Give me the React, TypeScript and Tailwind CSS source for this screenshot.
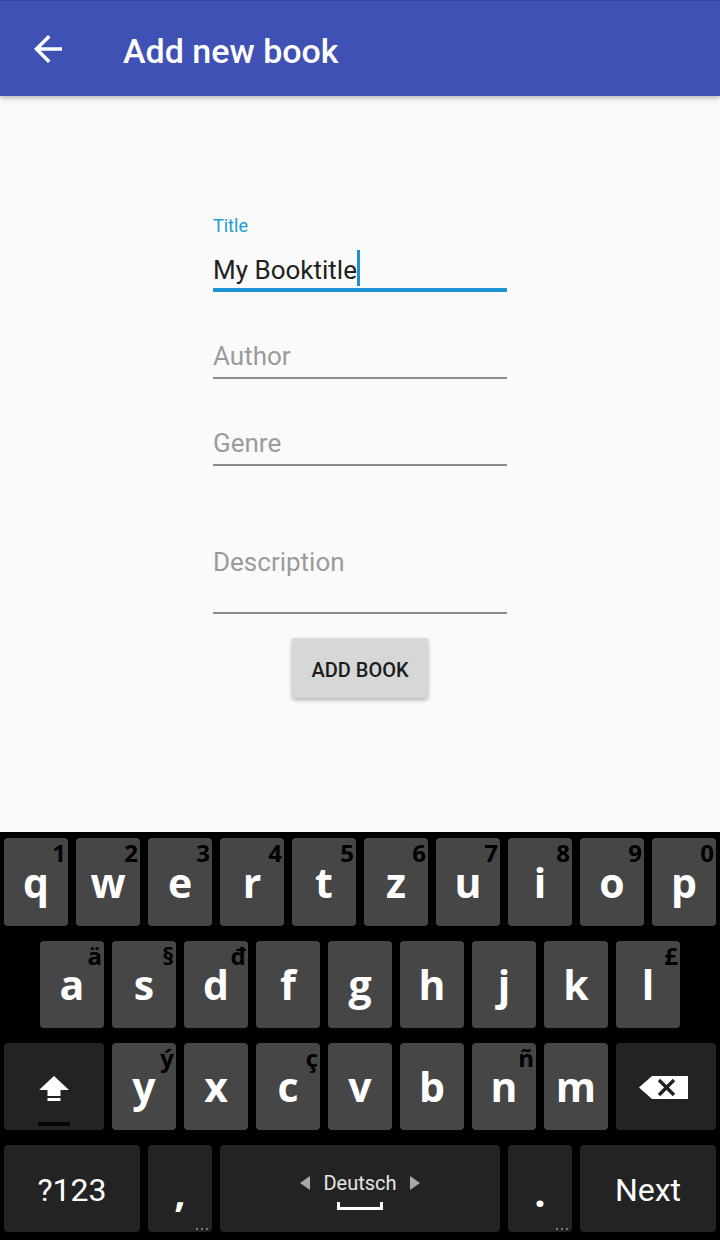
import React from "react";

const KEYFONT = { fontFamily: '"Open Sans", "DejaVu Sans", sans-serif' };
const ROBOTO = { fontFamily: 'Roboto, "Noto Sans", sans-serif' };

function LetterKey({ ch, hint }: { ch: string; hint?: string }) {
  return (
    <div className="relative flex h-full w-[64px] items-center justify-center rounded-[4px] bg-[#464646]">
      <span className="text-[41px] font-bold leading-[41px] text-white" style={KEYFONT}>
        {ch}
      </span>
      {hint && (
        <span
          className="absolute right-[2px] top-[3px] text-[24px] font-bold leading-[24px] text-black"
          style={KEYFONT}
        >
          {hint}
        </span>
      )}
    </div>
  );
}

function Dots() {
  return (
    <div className="absolute bottom-[2px] right-[4px] flex gap-[3px]">
      <div className="h-[2px] w-[2px] bg-[#777]" />
      <div className="h-[2px] w-[2px] bg-[#777]" />
      <div className="h-[2px] w-[2px] bg-[#777]" />
    </div>
  );
}

export default function App() {
  const row1: [string, string][] = [
    ["q", "1"], ["w", "2"], ["e", "3"], ["r", "4"], ["t", "5"],
    ["z", "6"], ["u", "7"], ["i", "8"], ["o", "9"], ["p", "0"],
  ];
  const row2: [string, string | undefined][] = [
    ["a", "ä"], ["s", "§"], ["d", "đ"], ["f", undefined], ["g", undefined],
    ["h", undefined], ["j", undefined], ["k", undefined], ["l", "£"],
  ];
  const row3: [string, string | undefined][] = [
    ["y", "ý"], ["x", undefined], ["c", "ç"], ["v", undefined], ["b", undefined],
    ["n", "ñ"], ["m", undefined],
  ];

  return (
    <div className="flex h-[1240px] w-[720px] flex-col bg-[#FAFAFA]" style={ROBOTO}>
      {/* App bar */}
      <div className="relative z-10 flex h-[96px] shrink-0 items-start border-t border-[#3244a3] bg-[#3F51B5] shadow-[0_2px_5px_rgba(0,0,0,0.28)]">
        <svg className="ml-[27px] mt-[27px]" width="42" height="42" viewBox="0 0 24 24" fill="white">
          <path d="M20 11H7.83l5.59-5.59L12 4l-8 8 8 8 1.41-1.41L7.83 13H20v-2z" />
        </svg>
        <div className="ml-[54px] mt-[30px] text-[34px] font-medium leading-[40px] text-white">
          Add new book
        </div>
      </div>

      {/* Form */}
      <div className="flex-1">
        <div className="mx-auto flex w-[294px] flex-col pt-[120px]">
          <div className="text-[18px] leading-[20px] text-[#1E9BD7]">Title</div>
          <div className="mt-[18px] flex h-[32px] items-start">
            <span className="text-[26px] leading-[32px] text-[#212121]">My Booktitle</span>
            <div className="-mt-[4px] h-[36px] w-[3px] bg-[#1E8FD3]" />
          </div>
          <div className="mt-[2px] h-[4px] bg-[#1E93D5]" />

          <div className="mt-[48px] h-[32px] text-[26px] leading-[32px] text-[#9B9B9B]">Author</div>
          <div className="mt-[5px] h-[2px] bg-[#8C8C8C]" />

          <div className="mt-[48px] h-[32px] text-[26px] leading-[32px] text-[#9B9B9B]">Genre</div>
          <div className="mt-[5px] h-[2px] bg-[#8C8C8C]" />

          <div className="mt-[80px] h-[32px] text-[26px] leading-[32px] text-[#9B9B9B]">Description</div>
          <div className="mt-[34px] h-[2px] bg-[#8C8C8C]" />

          <div className="mx-auto mt-[24px] flex h-[60px] w-[136px] items-center justify-center rounded-[3px] bg-[#D6D7D7] pt-[4px] shadow-[0_2px_4px_rgba(0,0,0,0.3)]">
            <span className="text-[20px] font-medium leading-[24px] text-[#1c1c1c]">ADD BOOK</span>
          </div>
        </div>
      </div>

      {/* Keyboard */}
      <div className="flex h-[408px] shrink-0 flex-col gap-[15px] bg-black pt-[6px]">
        <div className="flex h-[88px] gap-[8px] px-[4px]">
          {row1.map(([c, h]) => (
            <LetterKey key={c} ch={c} hint={h} />
          ))}
        </div>
        <div className="flex h-[87px] gap-[8px] pl-[40px]">
          {row2.map(([c, h]) => (
            <LetterKey key={c} ch={c} hint={h} />
          ))}
        </div>
        <div className="flex h-[87px] gap-[8px] px-[4px]">
          <div className="relative flex h-full w-[100px] items-start justify-center rounded-[4px] bg-[#232323]">
            <svg className="mt-[32px]" width="32" height="28" viewBox="0 0 32 28" fill="white">
              <polygon points="16,1 31,15 0,15 1,15" />
              <rect x="9.5" y="15" width="13" height="6" />
              <rect x="9.5" y="23" width="13" height="3" />
            </svg>
            <div className="absolute bottom-[4px] left-[34px] h-[4px] w-[32px] bg-[#050505]" />
          </div>
          {row3.map(([c, h]) => (
            <LetterKey key={c} ch={c} hint={h} />
          ))}
          <div className="flex h-full w-[100px] items-start justify-start rounded-[4px] bg-[#232323]">
            <svg className="ml-[23px] mt-[33px]" width="50" height="23" viewBox="0 0 50 23">
              <polygon points="0,11.5 13,0 49,0 49,23 13,23" fill="white" />
              <line x1="20" y1="4" x2="35" y2="19" stroke="#222" strokeWidth="3.4" />
              <line x1="35" y1="4" x2="20" y2="19" stroke="#222" strokeWidth="3.4" />
            </svg>
          </div>
        </div>
        <div className="flex h-[87px] gap-[8px] px-[4px]">
          <div className="flex h-full w-[136px] items-center justify-center rounded-[4px] bg-[#232323] pt-[2px]">
            <span className="text-[32px] leading-[36px] text-white">?123</span>
          </div>
          <div className="relative flex h-full w-[64px] items-center justify-center rounded-[4px] bg-[#232323] pt-[6px]">
            <span className="text-[40px] font-bold leading-[40px] text-white" style={KEYFONT}>,</span>
            <Dots />
          </div>
          <div className="flex h-full w-[280px] flex-col items-center rounded-[4px] bg-[#232323] pt-[26px]">
            <div className="flex items-center">
              <svg width="10" height="14" viewBox="0 0 10 14" fill="#A8A8A8">
                <polygon points="10,0 10,14 0,7" />
              </svg>
              <span className="mx-[13px] text-[20px] leading-[24px] text-[#E6E6E6]">Deutsch</span>
              <svg width="10" height="14" viewBox="0 0 10 14" fill="#A8A8A8">
                <polygon points="0,0 0,14 10,7" />
              </svg>
            </div>
            <svg className="mt-[7px]" width="46" height="8" viewBox="0 0 46 8" fill="white">
              <rect x="0" y="5" width="46" height="3" />
              <rect x="0" y="0" width="3" height="8" />
              <rect x="43" y="0" width="3" height="8" />
            </svg>
          </div>
          <div className="relative flex h-full w-[64px] items-center justify-center rounded-[4px] bg-[#232323] pt-[6px]">
            <span className="text-[40px] font-bold leading-[40px] text-white" style={KEYFONT}>.</span>
            <Dots />
          </div>
          <div className="flex h-full w-[136px] items-center justify-center rounded-[4px] bg-[#232323] pt-[2px]">
            <span className="text-[32px] leading-[36px] text-white">Next</span>
          </div>
        </div>
      </div>
    </div>
  );
}
